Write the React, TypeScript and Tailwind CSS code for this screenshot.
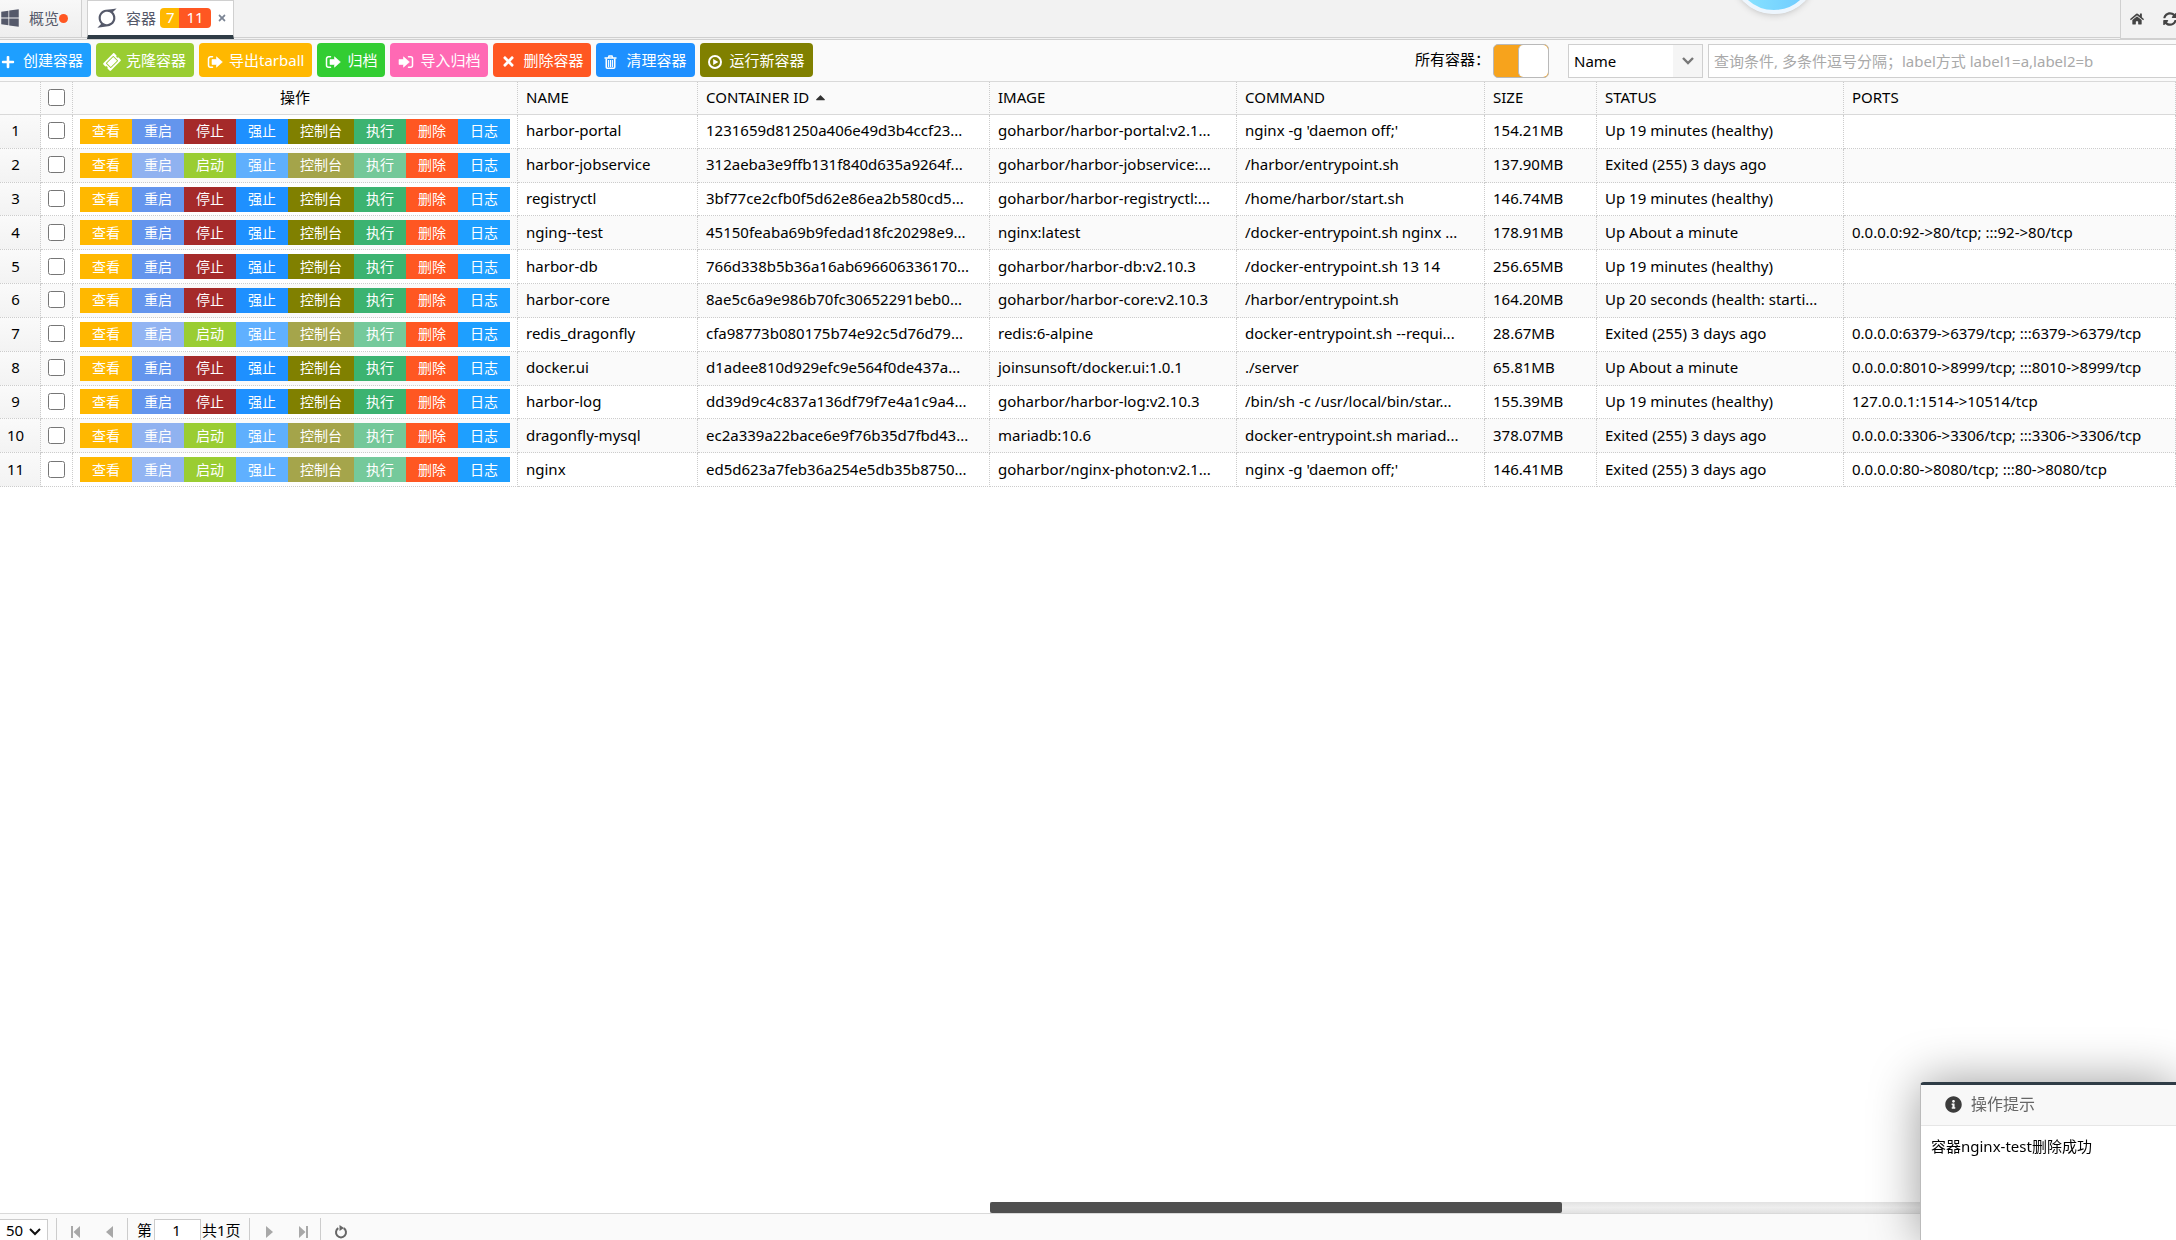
import type { ReactNode } from 'react'
import {
  FaCaretUp,
  FaHome,
  FaInfoCircle,
  FaPlus,
  FaSuperpowers,
  FaSyncAlt,
  FaTicketAlt,
  FaTimes,
  FaWindows,
} from 'react-icons/fa'

interface Container {
  name: string
  id: string
  image: string
  command: string
  size: string
  status: string
  ports: string
  running: boolean
}

const containers: Container[] = [
  { name: 'harbor-portal', id: '1231659d81250a406e49d3b4ccf23...', image: 'goharbor/harbor-portal:v2.1...', command: "nginx -g 'daemon off;'", size: '154.21MB', status: 'Up 19 minutes (healthy)', ports: '', running: true },
  { name: 'harbor-jobservice', id: '312aeba3e9ffb131f840d635a9264f...', image: 'goharbor/harbor-jobservice:...', command: '/harbor/entrypoint.sh', size: '137.90MB', status: 'Exited (255) 3 days ago', ports: '', running: false },
  { name: 'registryctl', id: '3bf77ce2cfb0f5d62e86ea2b580cd5...', image: 'goharbor/harbor-registryctl:...', command: '/home/harbor/start.sh', size: '146.74MB', status: 'Up 19 minutes (healthy)', ports: '', running: true },
  { name: 'nging--test', id: '45150feaba69b9fedad18fc20298e9...', image: 'nginx:latest', command: '/docker-entrypoint.sh nginx ...', size: '178.91MB', status: 'Up About a minute', ports: '0.0.0.0:92->80/tcp; :::92->80/tcp', running: true },
  { name: 'harbor-db', id: '766d338b5b36a16ab696606336170...', image: 'goharbor/harbor-db:v2.10.3', command: '/docker-entrypoint.sh 13 14', size: '256.65MB', status: 'Up 19 minutes (healthy)', ports: '', running: true },
  { name: 'harbor-core', id: '8ae5c6a9e986b70fc30652291beb0...', image: 'goharbor/harbor-core:v2.10.3', command: '/harbor/entrypoint.sh', size: '164.20MB', status: 'Up 20 seconds (health: starti...', ports: '', running: true },
  { name: 'redis_dragonfly', id: 'cfa98773b080175b74e92c5d76d79...', image: 'redis:6-alpine', command: 'docker-entrypoint.sh --requi...', size: '28.67MB', status: 'Exited (255) 3 days ago', ports: '0.0.0.0:6379->6379/tcp; :::6379->6379/tcp', running: false },
  { name: 'docker.ui', id: 'd1adee810d929efc9e564f0de437a...', image: 'joinsunsoft/docker.ui:1.0.1', command: './server', size: '65.81MB', status: 'Up About a minute', ports: '0.0.0.0:8010->8999/tcp; :::8010->8999/tcp', running: true },
  { name: 'harbor-log', id: 'dd39d9c4c837a136df79f7e4a1c9a4...', image: 'goharbor/harbor-log:v2.10.3', command: '/bin/sh -c /usr/local/bin/star...', size: '155.39MB', status: 'Up 19 minutes (healthy)', ports: '127.0.0.1:1514->10514/tcp', running: true },
  { name: 'dragonfly-mysql', id: 'ec2a339a22bace6e9f76b35d7fbd43...', image: 'mariadb:10.6', command: 'docker-entrypoint.sh mariad...', size: '378.07MB', status: 'Exited (255) 3 days ago', ports: '0.0.0.0:3306->3306/tcp; :::3306->3306/tcp', running: false },
  { name: 'nginx', id: 'ed5d623a7feb36a254e5db35b8750...', image: 'goharbor/nginx-photon:v2.1...', command: "nginx -g 'daemon off;'", size: '146.41MB', status: 'Exited (255) 3 days ago', ports: '0.0.0.0:80->8080/tcp; :::80->8080/tcp', running: false },
]

function SignOutIcon() {
  return (
    <svg viewBox="0 0 16 14" className="w-4 h-[14px]" fill="none">
      <path d="M5.500 1.800H3.500A2 2 0 0 0 1.500 3.800v6.400a2 2 0 0 0 2 2H5.500" stroke="currentColor" strokeWidth="1.5" strokeLinecap="round" />
      <path d="M9.500 1.800 15.400 7l-5.900 5.200V9.500H5v-5h4.500z" fill="currentColor" stroke="currentColor" strokeWidth=".6" strokeLinejoin="round" />
    </svg>
  )
}

function SignInIcon() {
  return (
    <svg viewBox="0 0 16 14" className="w-4 h-[14px]" fill="none">
      <path d="M10.500 1.800h2a2 2 0 0 1 2 2v6.400a2 2 0 0 1-2 2h-2" stroke="currentColor" strokeWidth="1.5" strokeLinecap="round" />
      <path d="M5.500 1.800 11.400 7l-5.900 5.200V9.500H1v-5h4.500z" fill="currentColor" stroke="currentColor" strokeWidth=".6" strokeLinejoin="round" />
    </svg>
  )
}

function TrashIcon() {
  return (
    <svg viewBox="0 0 13 14" className="w-[13px] h-[14px]" fill="none" stroke="currentColor">
      <path d="M.5 3h12M4.300 3l.7-2h3l.7 2" strokeWidth="1.400" />
      <path d="M2.300 3.500v8.700c0 .6.4 1 1 1h6.400c.6 0 1-.4 1-1V3.500" strokeWidth="1.600" />
      <path d="M4.600 5v7M6.500 5v7M8.400 5v7" strokeWidth="1.100" />
    </svg>
  )
}

function PlayCircleIcon() {
  return (
    <svg viewBox="0 0 14 14" className="size-[14px]" fill="none">
      <circle cx="7" cy="7" r="6" stroke="currentColor" strokeWidth="2" />
      <path d="M5.200 3.900v6.200L10.400 7z" fill="currentColor" />
    </svg>
  )
}

const tools: { label: string; color: string; icon: ReactNode }[] = [
  { label: '创建容器', color: 'bg-[#1e9fff]', icon: <FaPlus size={14} /> },
  { label: '克隆容器', color: 'bg-[#9acd32]', icon: <FaTicketAlt size={16} className="-rotate-45" /> },
  { label: '导出tarball', color: 'bg-[#ffb800]', icon: <SignOutIcon /> },
  { label: '归档', color: 'bg-[#32cd32]', icon: <SignOutIcon /> },
  { label: '导入归档', color: 'bg-[#ff69b4]', icon: <SignInIcon /> },
  { label: '删除容器', color: 'bg-[#ff5722]', icon: <FaTimes size={15} /> },
  { label: '清理容器', color: 'bg-[#1e90ff]', icon: <TrashIcon /> },
  { label: '运行新容器', color: 'bg-[#808000]', icon: <PlayCircleIcon /> },
]

function TabBar() {
  return (
    <div className="flex h-[40px] bg-[#f2f2f2] border-b border-[#d0d0d0]">
      <div role="tablist" className="flex flex-1 border-b border-[#d0d0d0] mb-px">
        <button role="tab" aria-selected={false} className="flex items-center w-[82px] h-[37px] pb-px text-[#55596a] border-r border-[#d0d0d0] bg-linear-to-b from-[#f8f8f8] to-[#eeeeee]">
          <FaWindows size={20} className="mr-[9px]" />
          概览
          <span className="size-[9px] rounded-full bg-[#ff5722]" />
        </button>
        <div className="relative flex items-center ml-[5px] w-[147px] h-[39px] border-x border-t border-[#d0d0d0] border-b-4 border-b-[#2f3c46] bg-white">
          <button role="tab" aria-selected className="flex items-center h-full text-[#55596a]">
            <FaSuperpowers size={22} className="ml-[8px] mr-[8px]" />
            容器
            <span className="flex ml-1 h-[20px] leading-[19px] text-white rounded-sm overflow-hidden">
              <span className="w-[19px] pl-[6px] text-left bg-[#ffb800]">7</span>
              <span className="w-[32px] text-center bg-[#ff5722]">11</span>
            </span>
          </button>
          <button aria-label="关闭" className="ml-[6px] text-[#7b8494]">
            <FaTimes size={10} />
          </button>
        </div>
      </div>
      <div className="flex items-center w-[56px] h-[39px] pl-[9px] border-l border-b border-[#d0d0d0] text-[#444444] overflow-hidden">
        <button aria-label="主页" className="shrink-0">
          <FaHome size={14} />
        </button>
        <button aria-label="刷新" className="shrink-0 ml-[19px]">
          <FaSyncAlt size={14} />
        </button>
      </div>
      {/* floating assistant ball, mostly above the window edge */}
      <div className="absolute -top-[72px] left-[1731px] size-[86px] rounded-full border-4 border-[#edf6fe] bg-linear-to-r from-[#8be6ff] to-[#6cc8ff] shadow-md" />
    </div>
  )
}

function Toolbar() {
  return (
    <div className="flex items-start h-[42px] pt-[3px] bg-[#fafafa] border-b border-[#d9d9d9] overflow-hidden">
      <div className="flex gap-[5px] -ml-[7px]">
        {tools.map((tool) => (
          <button key={tool.label} className={`flex items-center h-[34px] px-2 pb-px rounded-sm text-white whitespace-nowrap ${tool.color}`}>
            <span className="w-[22px] pt-1">{tool.icon}</span>
            {tool.label}
          </button>
        ))}
      </div>
      <label htmlFor="all" className="ml-auto w-[78px] leading-[33px] text-black whitespace-nowrap">
        所有容器：
      </label>
      <span className="relative flex mt-px w-[56px] h-[34px] border border-[#b9b9b9] rounded-[5px] overflow-hidden bg-[#f7a31c]">
        <input id="all" type="checkbox" role="switch" defaultChecked className="absolute inset-0 opacity-0" />
        <span className="ml-auto w-[30px] rounded-[5px] border-l border-[#b9b9b9] bg-white" />
      </span>
      <span className="relative flex mt-px ml-[19px] w-[135px] h-[34px] border border-[#cfcfcf] bg-white">
        <select aria-label="查询字段" className="flex-1 pl-[5px] pb-px appearance-none outline-none">
          <option>Name</option>
        </select>
        <span className="flex items-center justify-center w-[29px] bg-[#f5f5f5] pointer-events-none">
          <svg viewBox="0 0 14 10" className="w-[14px] h-[10px]" fill="none" stroke="#777" strokeWidth="2.4">
            <path d="M2 2l5 5 5-5" />
          </svg>
        </span>
      </span>
      <input
        aria-label="查询条件"
        placeholder="查询条件, 多条件逗号分隔；label方式 label1=a,label2=b"
        className="mt-px ml-[5px] w-[468px] h-[34px] pl-[5px] pb-px bg-white border border-r-0 border-[#cfcfcf] placeholder:text-[#a9a9a9]"
      />
    </div>
  )
}

function Actions({ running }: { running: boolean }) {
  const btn = 'h-[25px] px-3 text-sm leading-6 disabled:opacity-70'
  return (
    <div className="flex justify-center text-white whitespace-nowrap">
      <button className={`${btn} bg-[#ffb800]`}>查看</button>
      <button disabled={!running} className={`${btn} bg-[#6495ed]`}>重启</button>
      {running ? (
        <button className={`${btn} bg-[#a52a2a]`}>停止</button>
      ) : (
        <button className={`${btn} bg-[#9acd32]`}>启动</button>
      )}
      <button disabled={!running} className={`${btn} bg-[#1e90ff]`}>强止</button>
      <button disabled={!running} className={`${btn} bg-[#808000]`}>控制台</button>
      <button disabled={!running} className={`${btn} bg-[#3cb371]`}>执行</button>
      <button className={`${btn} bg-[#ff5722]`}>删除</button>
      <button className={`${btn} bg-[#1e9fff]`}>日志</button>
    </div>
  )
}

const headBorder = 'border-r border-b border-r-[#cccccc] border-b-[#d9d9d9] [border-right-style:dotted] pb-[2px]'
const headCell = `${headBorder} px-2 font-normal text-left`
const cellBorder = 'border-r border-b border-dotted border-[#cccccc]'
const cell = `${cellBorder} px-2 pb-[2px] whitespace-nowrap overflow-hidden`

function ContainerTable() {
  return (
    <table className="w-full h-[405px] table-fixed border-separate border-spacing-0 text-black">
      <colgroup>
        <col className="w-[41px]" />
        <col className="w-[32px]" />
        <col className="w-[445px]" />
        <col className="w-[180px]" />
        <col className="w-[292px]" />
        <col className="w-[247px]" />
        <col className="w-[248px]" />
        <col className="w-[112px]" />
        <col className="w-[247px]" />
        <col />
      </colgroup>
      <thead>
        <tr className="h-[33px] bg-[#fafafa]">
          <th className={headCell} />
          <th className={headBorder}>
            <input type="checkbox" aria-label="全选" className="block mx-auto size-[17px]" />
          </th>
          <th className={`${headBorder} font-normal text-center`}>操作</th>
          <th className={headCell}>NAME</th>
          <th className={headCell}>
            <span className="flex items-center gap-1">
              CONTAINER ID
              <FaCaretUp size={15} className="text-[#333333]" />
            </span>
          </th>
          <th className={headCell}>IMAGE</th>
          <th className={headCell}>COMMAND</th>
          <th className={headCell}>SIZE</th>
          <th className={headCell}>STATUS</th>
          <th className={headCell}>PORTS</th>
        </tr>
      </thead>
      <tbody>
        {containers.map((c, i) => (
          <tr key={c.id} className="even:bg-[#fafafa]">
            <td className={`${cellBorder} pr-[9px] pb-[2px] text-center bg-linear-to-b from-[#fafafa] to-[#f3f3f3]`}>{i + 1}</td>
            <td className={`${cellBorder} pb-px`}>
              <input type="checkbox" aria-label={c.name} className="block mx-auto size-[17px]" />
            </td>
            <td className={cellBorder}>
              <Actions running={c.running} />
            </td>
            <td className={cell}>{c.name}</td>
            <td className={cell}>{c.id}</td>
            <td className={cell}>{c.image}</td>
            <td className={cell}>{c.command}</td>
            <td className={cell}>{c.size}</td>
            <td className={cell}>{c.status}</td>
            <td className={cell}>{c.ports}</td>
          </tr>
        ))}
      </tbody>
    </table>
  )
}

function Pager() {
  const sep = 'w-px h-[32px] bg-[#cccccc]'
  return (
    <div className="flex items-start h-[27px] pt-1 border-t border-[#d9d9d9] bg-[#fafafa] overflow-hidden text-black">
      <div className="relative flex items-center w-[48px] h-[30px] mt-px border border-l-0 border-[#cccccc] bg-white">
        <select aria-label="每页条数" className="w-full pl-[6px] pb-2 appearance-none outline-none">
          <option>50</option>
        </select>
        <svg viewBox="0 0 14 10" className="absolute right-[5px] top-[7px] w-[14px] h-[10px] pointer-events-none" fill="none" stroke="#111" strokeWidth="2">
          <path d="M2 2l5 5 5-5" />
        </svg>
      </div>
      <span className={`${sep} ml-2`} />
      <button aria-label="首页" className="ml-[13px] mt-2 text-[#a8a8a8]">
        <svg viewBox="0 0 12 12" className="size-3" fill="currentColor">
          <path d="M1 0h2v12H1zM10 0v12L3.500 6z" />
        </svg>
      </button>
      <button aria-label="上一页" className="ml-[22px] mt-2 text-[#a8a8a8]">
        <svg viewBox="0 0 12 12" className="size-3" fill="currentColor">
          <path d="M9 0v12L2 6z" />
        </svg>
      </button>
      <span className={`${sep} ml-[11px]`} />
      <label htmlFor="page" className="ml-[9px] leading-6">第</label>
      <input id="page" defaultValue="1" className="ml-[2px] mt-px w-[47px] h-[30px] pr-[2px] pb-2 text-center border border-[#cccccc] bg-white" />
      <span className="ml-px leading-6">共1页</span>
      <span className={`${sep} ml-[8px]`} />
      <button aria-label="下一页" className="ml-[13px] mt-2 text-[#a8a8a8]">
        <svg viewBox="0 0 12 12" className="size-3" fill="currentColor">
          <path d="M3 0v12l7-6z" />
        </svg>
      </button>
      <button aria-label="末页" className="ml-[22px] mt-2 text-[#a8a8a8]">
        <svg viewBox="0 0 12 12" className="size-3" fill="currentColor">
          <path d="M9 0h2v12H9zM2 0v12l6.500-6z" />
        </svg>
      </button>
      <span className={`${sep} ml-[11px]`} />
      <button aria-label="刷新列表" className="ml-[13px] mt-[7px] text-[#666666]">
        <svg viewBox="0 0 14 14" className="size-[14px]" fill="none">
          <path d="M4.300 3.200A5 5 0 1 0 9.700 3.200" stroke="currentColor" strokeWidth="2" />
          <path d="M5.500 0v6L10 3z" fill="currentColor" />
        </svg>
      </button>
    </div>
  )
}

function Toast() {
  return (
    <div role="status" className="fixed right-0 bottom-0 w-[256px] h-[158px] rounded-tl-sm border-t-3 border-l border-t-[#2f3c46] border-l-[#bbbbbb] bg-white shadow-[0_0_50px_rgba(0,0,0,0.4)]">
      <div className="flex items-center h-[41px] pl-6 pb-[2px] border-b border-[#e6e6e6] bg-[#f8f8f8] text-[#666666] text-base">
        <FaInfoCircle size={17} className="mr-[9px] text-[#3c3c3c]" />
        操作提示
      </div>
      <p className="px-[10px] pt-[10px] leading-5 text-black">容器nginx-test删除成功</p>
    </div>
  )
}

export default function App() {
  return (
    <div className={`relative flex flex-col h-screen overflow-hidden bg-white text-[15px] leading-5 font-["Noto_Sans","Noto_Sans_CJK_SC",sans-serif]`}>
      <TabBar />
      <Toolbar />
      <div className="flex-1">
        <ContainerTable />
      </div>
      {/* horizontal scrollbar of the unfrozen columns */}
      <div className="h-[11px] ml-[990px] bg-linear-to-b from-[#e2e2e2] via-[#eeeeee] to-[#e2e2e2]">
        <div className="w-[572px] h-full rounded-xs bg-[#4f4f4f]" />
      </div>
      <Pager />
      <Toast />
    </div>
  )
}
